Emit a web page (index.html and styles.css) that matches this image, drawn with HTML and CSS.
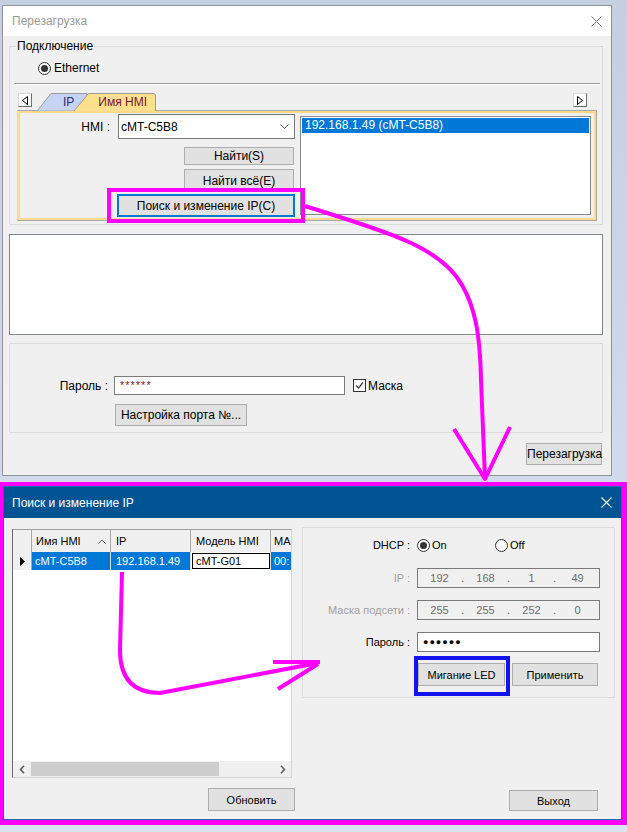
FILE: index.html
```html
<!DOCTYPE html>
<html>
<head>
<meta charset="utf-8"/>
<link rel="stylesheet" href="styles.css">
<title>Перезагрузка</title>
</head>
<body>
<div class="page">

<div class="win">
  <div class="win-title">
    <span>Перезагрузка</span>
    <svg width="11" height="11"><path d="M0.5 0.5 L10.5 10.5 M10.5 0.5 L0.5 10.5" stroke="#7a7a7a"/></svg>
  </div>
  <div class="win-body">
    <fieldset class="group conn">
      <legend>Подключение</legend>
      <div class="radio-row"><span class="radio on"></span>Ethernet</div>
      <div class="sep"></div>
      <div class="tabstrip">
        <span class="scroll-btn left"><svg width="6" height="9"><path d="M5.5 0.5 V8.5 L0.5 4.5 Z" fill="#fff" stroke="#000"/></svg></span>
        <div class="tabs">
          <svg class="tab-shapes" width="122" height="19">
            <path d="M2.5 18.5 L16 1.5 H52 V18.5" fill="#c6d3f3" stroke="#9c9c9c"/>
            <path d="M39 19 L53.5 1.5 H118 Q120.5 1.5 120.5 4 V19" fill="#fde08d" stroke="#9c9c9c"/>
          </svg>
          <span class="tab-label tab-ip">IP</span>
          <span class="tab-label tab-hmi">Имя HMI</span>
        </div>
        <span class="scroll-btn right"><svg width="6" height="9"><path d="M0.5 0.5 V8.5 L5.5 4.5 Z" fill="#fff" stroke="#000"/></svg></span>
      </div>
      <div class="tabpage">
        <div class="find-col">
          <div class="hmi-row">
            <span class="lbl">HMI :</span>
            <div class="combo"><span>cMT-C5B8</span><svg width="9" height="5"><polyline points="0.5,0.5 4.5,4.5 8.5,0.5" fill="none" stroke="#555"/></svg></div>
          </div>
          <button class="btn btn-find">Найти(S)</button>
          <button class="btn btn-findall">Найти всё(E)</button>
          <button class="btn btn-search mark-pink">Поиск и изменение IP(C)</button>
        </div>
        <div class="listbox">
          <div class="list-item sel">192.168.1.49 (cMT-C5B8)</div>
        </div>
      </div>
    </fieldset>

    <div class="logbox"></div>

    <div class="pass-group">
      <div class="pass-row">
        <span class="lbl">Пароль :</span>
        <div class="pass-input">******</div>
        <span class="check"><svg width="11" height="11"><polyline points="2,5.5 4.5,8 9,2.5" fill="none" stroke="#444" stroke-width="1.3"/></svg></span>
        <span>Маска</span>
      </div>
      <button class="btn btn-port">Настройка порта №...</button>
    </div>

    <div class="win-actions"><button class="btn">Перезагрузка</button></div>
  </div>
</div>

<div class="dlg-frame">
  <div class="dlg">
    <div class="dlg-title">
      <span>Поиск и изменение IP</span>
      <svg width="11" height="11"><path d="M0.5 0.5 L10.5 10.5 M10.5 0.5 L0.5 10.5" stroke="#fff" stroke-width="1.1"/></svg>
    </div>
    <div class="dlg-body">
      <div class="dgv">
        <div class="dgv-head">
          <div class="c rh"></div>
          <div class="c c1 sort">Имя HMI<svg width="8" height="5"><polyline points="0.5,4.5 4,1 7.5,4.5" fill="none" stroke="#606060"/></svg></div>
          <div class="c c2">IP</div>
          <div class="c c3">Модель HMI</div>
          <div class="c c4">MA</div>
        </div>
        <div class="dgv-row">
          <div class="c rh"><svg width="5" height="9"><path d="M0 0 L5 4.5 L0 9 Z" fill="#000"/></svg></div>
          <div class="c c1 sel">cMT-C5B8</div>
          <div class="c c2 sel">192.168.1.49</div>
          <div class="c c3 edit"><span>cMT-G01</span></div>
          <div class="c c4 sel">00:</div>
        </div>
        <div class="dgv-fill"></div>
        <div class="hscroll">
          <span class="hs-arrow"><svg width="6" height="9"><polyline points="5,0.8 1.5,4.5 5,8.2" fill="none" stroke="#606060" stroke-width="1.6"/></svg></span>
          <span class="hs-thumb"></span>
          <span class="hs-arrow end"><svg width="6" height="9"><polyline points="1,0.8 4.5,4.5 1,8.2" fill="none" stroke="#606060" stroke-width="1.6"/></svg></span>
        </div>
      </div>

      <div class="ipgroup">
        <div class="ip-row dhcp">
          <span class="lbl">DHCP :</span>
          <span class="opt first"><span class="radio on"></span>On</span>
          <span class="opt"><span class="radio"></span>Off</span>
        </div>
        <div class="ip-row r-ip">
          <span class="lbl dim">IP :</span>
          <div class="field off"><span class="seg">192</span><span class="dot">.</span><span class="seg">168</span><span class="dot">.</span><span class="seg">1</span><span class="dot">.</span><span class="seg">49</span></div>
        </div>
        <div class="ip-row r-mask">
          <span class="lbl dim">Маска подсети :</span>
          <div class="field off"><span class="seg">255</span><span class="dot">.</span><span class="seg">255</span><span class="dot">.</span><span class="seg">252</span><span class="dot">.</span><span class="seg">0</span></div>
        </div>
        <div class="ip-row r-pw">
          <span class="lbl">Пароль :</span>
          <div class="field pw">●●●●●●</div>
        </div>
        <div class="ip-btns">
          <button class="btn btn-led mark-blue">Мигание LED</button>
          <button class="btn btn-apply">Применить</button>
        </div>
      </div>

      <button class="btn btn-refresh">Обновить</button>
      <button class="btn btn-exit">Выход</button>
    </div>
  </div>
</div>

<svg class="annot" width="627" height="832" viewBox="0 0 627 832">
  <g fill="none" stroke="#ff00ff" stroke-width="4" stroke-linejoin="round">
    <path d="M305 206 C380 230 440 245 462 285 C474 306 480 330 481 380 L485 478"/>
    <path d="M454 429 L485 479 L510 427"/>
    <path d="M122 572 L120 650 Q120 693 160 693 L318 663"/>
    <path d="M273 662 L320 662 M278 689 L318 664"/>
  </g>
</svg>

</div>
</body>
</html>
```

FILE: styles.css
```css
body {
  margin: 0;
  font-family: "Liberation Sans", Arial, sans-serif;
  font-size: 12px;
  color: #000;
}

.page {
  position: relative;
  width: 627px;
  height: 832px;
  overflow: hidden;
  padding-top: 5px;
  box-sizing: border-box;
  background: linear-gradient(#c6cfe0, #d2dbeb 60%, #d9e3f1);
}

/* top window */
.win {
  box-sizing: border-box;
  width: 610px;
  height: 471px;
  margin-left: 2px;
  border: 1px solid #8d929b;
  background: #f0f0f0;
}
.win-title {
  height: 30px;
  background: #fff;
  display: flex;
  align-items: center;
  justify-content: space-between;
  padding: 0 9px 0 9px;
  color: #9a9a9a;
}
.win-body { padding: 3px 8px 0 6px; }

.group { margin: 0; border: 1px solid #dcdcdc; min-width: 0; }
.conn { padding: 0 2px 3px 4px; }
.conn legend { margin-left: 2px; padding: 0 1px; line-height: 14px; }

.radio-row { display: flex; align-items: center; gap: 3px; margin: 8px 0 0 24px; height: 14px; }
.radio {
  box-sizing: border-box;
  width: 13px; height: 13px;
  border: 1px solid #333;
  border-radius: 50%;
  background: #fff;
  display: inline-flex;
  align-items: center;
  justify-content: center;
  flex-shrink: 0;
}
.radio.on::after { content: ''; width: 7px; height: 7px; border-radius: 50%; background: #333; }

.sep { margin-top: 8px; border-top: 1px solid #a0a0a0; border-bottom: 1px solid #fff; }

.tabstrip { display: flex; height: 18px; margin-top: 7px; }
.scroll-btn {
  box-sizing: border-box;
  width: 14px; height: 14px;
  margin-top: 1px;
  border: 1px solid;
  border-color: #dadada #6f6f6f #6f6f6f #dadada;
  background: #fff;
  display: flex;
  align-items: center;
  justify-content: center;
}
.scroll-btn.left { margin-left: 4px; }
.scroll-btn.right { margin-left: auto; margin-right: 13px; }
.tabs { position: relative; z-index: 1; width: 122px; margin-left: 3px; display: flex; }
.tab-shapes { position: absolute; left: 0; top: 0; }
.tab-label { position: relative; line-height: 18px; padding-top: 1px; }
.tab-ip { margin-left: 28px; color: #23307a; }
.tab-hmi { margin-left: 24px; color: #7b1232; }

.tabpage {
  box-sizing: border-box;
  height: 111px;
  margin: 0 3px;
  border: 1px solid #a9a9a9;
  border-left-color: #fcd98c;
  box-shadow: inset 0 0 0 2px #fcd98c;
  padding: 2px 5px 0 2px;
  display: flex;
}
.find-col { width: 275px; display: flex; flex-direction: column; align-items: flex-end; padding-top: 1px; }
.hmi-row { display: flex; align-items: center; }
.hmi-row .lbl { margin-right: 8px; }
.combo {
  box-sizing: border-box;
  width: 177px; height: 25px;
  border: 1px solid #7a7a7a;
  background: #fff;
  display: flex;
  align-items: center;
  padding-left: 2px;
}
.combo svg { margin-left: auto; margin-right: 5px; }

.btn {
  box-sizing: border-box;
  font: inherit;
  color: #000;
  background: #e1e1e1;
  border: 1px solid #adadad;
  padding: 0;
}
.btn-find { width: 110px; height: 18px; margin: 8px 1px 0 0; }
.btn-findall { width: 110px; height: 23px; margin: 4px 1px 0 0; }
.btn-search {
  position: relative;
  width: 178px; height: 23px;
  margin-top: 2px;
  border-color: #0078d7;
  box-shadow: inset 0 0 0 1px #0078d7;
}
.mark-pink::after {
  content: '';
  position: absolute;
  left: -11px; top: -7px; right: -11px; bottom: -7px;
  border: 4px solid #ff00ff;
}

.listbox {
  box-sizing: border-box;
  width: 291px; height: 99px;
  margin: 3px 0 0 5px;
  border: 1px solid #828790;
  background: #fff;
  padding: 1px;
}
.list-item { height: 15px; line-height: 15px; padding-left: 3px; }
.list-item.sel { background: #0078d7; color: #fff; }

.logbox { box-sizing: border-box; height: 101px; margin-top: 9px; border: 1px solid #828790; background: #fff; }

.pass-group { box-sizing: border-box; height: 90px; margin-top: 8px; border: 1px solid #dcdcdc; padding-top: 32px; }
.pass-row { display: flex; align-items: center; }
.pass-row .lbl { width: 98px; text-align: right; margin-right: 6px; }
.pass-input {
  box-sizing: border-box;
  width: 231px; height: 19px;
  border: 1px solid #7a7a7a;
  background: #fff;
  padding-left: 5px;
  color: #7b2424;
  font-size: 11px;
  letter-spacing: 1px;
  line-height: 17px;
}
.check {
  box-sizing: border-box;
  width: 13px; height: 13px;
  border: 1px solid #333;
  background: #fff;
  margin: 0 2px 0 8px;
  display: flex;
}
.btn-port { width: 132px; height: 22px; margin: 9px 0 0 105px; }

.win-actions { display: flex; justify-content: flex-end; margin-top: 10px; }
.win-actions .btn { width: 76px; height: 22px; margin-right: 1px; }

/* search dialog */
.dlg-frame {
  box-sizing: border-box;
  width: 627px;
  margin-top: 6px;
  border: solid #ff00ff;
  border-width: 4px 5px 5px 3px;
}
.dlg { border: 1px solid #1c6bb0; background: #f0f0f0; }
.dlg-title {
  box-sizing: border-box;
  height: 31px;
  background: #005494;
  color: #fff;
  display: flex;
  align-items: center;
  justify-content: space-between;
  padding: 0 9px 0 8px;
}
.dlg-body {
  box-sizing: border-box;
  height: 301px;
  display: grid;
  grid-template-columns: 283px 313px;
  grid-template-rows: 260px 41px;
  column-gap: 7px;
  padding-left: 8px;
  font-size: 11px;
}

.dgv {
  box-sizing: border-box;
  width: 280px; height: 249px;
  margin-top: 11px;
  border: 1px solid #d5d5d5;
  border-left-color: #696969;
  border-top-color: #a0a0a0;
  background: #fff;
  display: flex;
  flex-direction: column;
  overflow: hidden;
}
.dgv-head, .dgv-row { display: flex; flex-shrink: 0; }
.dgv-head { height: 22px; background: #f0f0f0; }
.dgv-row { height: 18px; }
.c { flex-shrink: 0; box-sizing: border-box; white-space: nowrap; overflow: hidden; }
.dgv-head .c { line-height: 22px; padding-left: 5px; border-right: 1px solid #a8a8a8; }
.dgv-row .c { line-height: 18px; padding-left: 4px; border-right: 1px solid #dcdcdc; }
.rh { width: 19px; }
.c1 { width: 79px; }
.c2 { width: 80px; }
.c3 { width: 80px; }
.c4 { width: 20px; }
.dgv-head .c1 { padding-left: 4px; }
.dgv-head .c4, .dgv-row .c4 { padding-left: 3px; border-right: 0; }
.sort { display: flex; align-items: center; justify-content: space-between; padding-right: 4px; }
.dgv-row .rh { background: #f0f0f0; display: flex; align-items: center; padding-left: 7px; border-right-color: #a8a8a8; }
.dgv-row .c1 { padding-left: 3px; }
.dgv-row .c2 { padding-left: 5px; }
.c.sel { background: #0078d7; color: #fff; }
.c.edit { padding: 1px 0 1px 1px; background: #fff; }
.c.edit span {
  display: block;
  box-sizing: border-box;
  height: 16px;
  line-height: 14px;
  border: 1px solid #000;
  padding-left: 3px;
}
.dgv-fill { flex: 1; }
.hscroll { display: flex; align-items: center; height: 16px; background: #f0f0f0; flex-shrink: 0; }
.hs-arrow { width: 18px; display: flex; justify-content: center; }
.hs-arrow.end { width: 17px; margin-left: auto; }
.hs-thumb { width: 188px; height: 14px; background: #cdcdcd; }

.btn-refresh { grid-column: 1; grid-row: 2; justify-self: end; align-self: end; width: 87px; height: 23px; margin-bottom: 8px; }
.btn-exit { grid-column: 2; grid-row: 2; justify-self: end; align-self: end; width: 89px; height: 21px; margin: 0 17px 8px 0; }

.ipgroup {
  grid-column: 2; grid-row: 1;
  align-self: start;
  box-sizing: border-box;
  height: 171px;
  margin-top: 9px;
  border: 1px solid #dcdcdc;
  padding-top: 9px;
}
.ip-row { display: flex; align-items: center; }
.ip-row .lbl { width: 107px; text-align: right; margin-right: 7px; flex-shrink: 0; }
.lbl.dim { color: #a0a0a0; }
.dhcp { height: 16px; }
.opt { display: flex; align-items: center; gap: 2px; }
.opt.first { width: 78px; }
.r-ip { margin-top: 15px; }
.r-mask, .r-pw { margin-top: 12px; }
.field {
  box-sizing: border-box;
  width: 183px; height: 20px;
  border: 1px solid #7a7a7a;
  display: flex;
  align-items: center;
}
.field.off { background: #f0f0f0; color: #6d6d6d; }
.seg { flex: 1; text-align: center; }
.dot { width: 3px; }
.field.pw { background: #fff; padding-left: 5px; font-size: 9px; letter-spacing: 1px; }
.ip-btns { display: flex; margin: 11px 0 0 115px; }
.btn-led { position: relative; width: 87px; height: 23px; }
.btn-apply { width: 86px; height: 23px; margin-left: 7px; }
.mark-blue::after {
  content: '';
  position: absolute;
  left: -5px; top: -8px; right: -6px; bottom: -11px;
  border: 4px solid #1212f0;
}

.annot { position: absolute; left: 0; top: 0; z-index: 5; pointer-events: none; }
```
